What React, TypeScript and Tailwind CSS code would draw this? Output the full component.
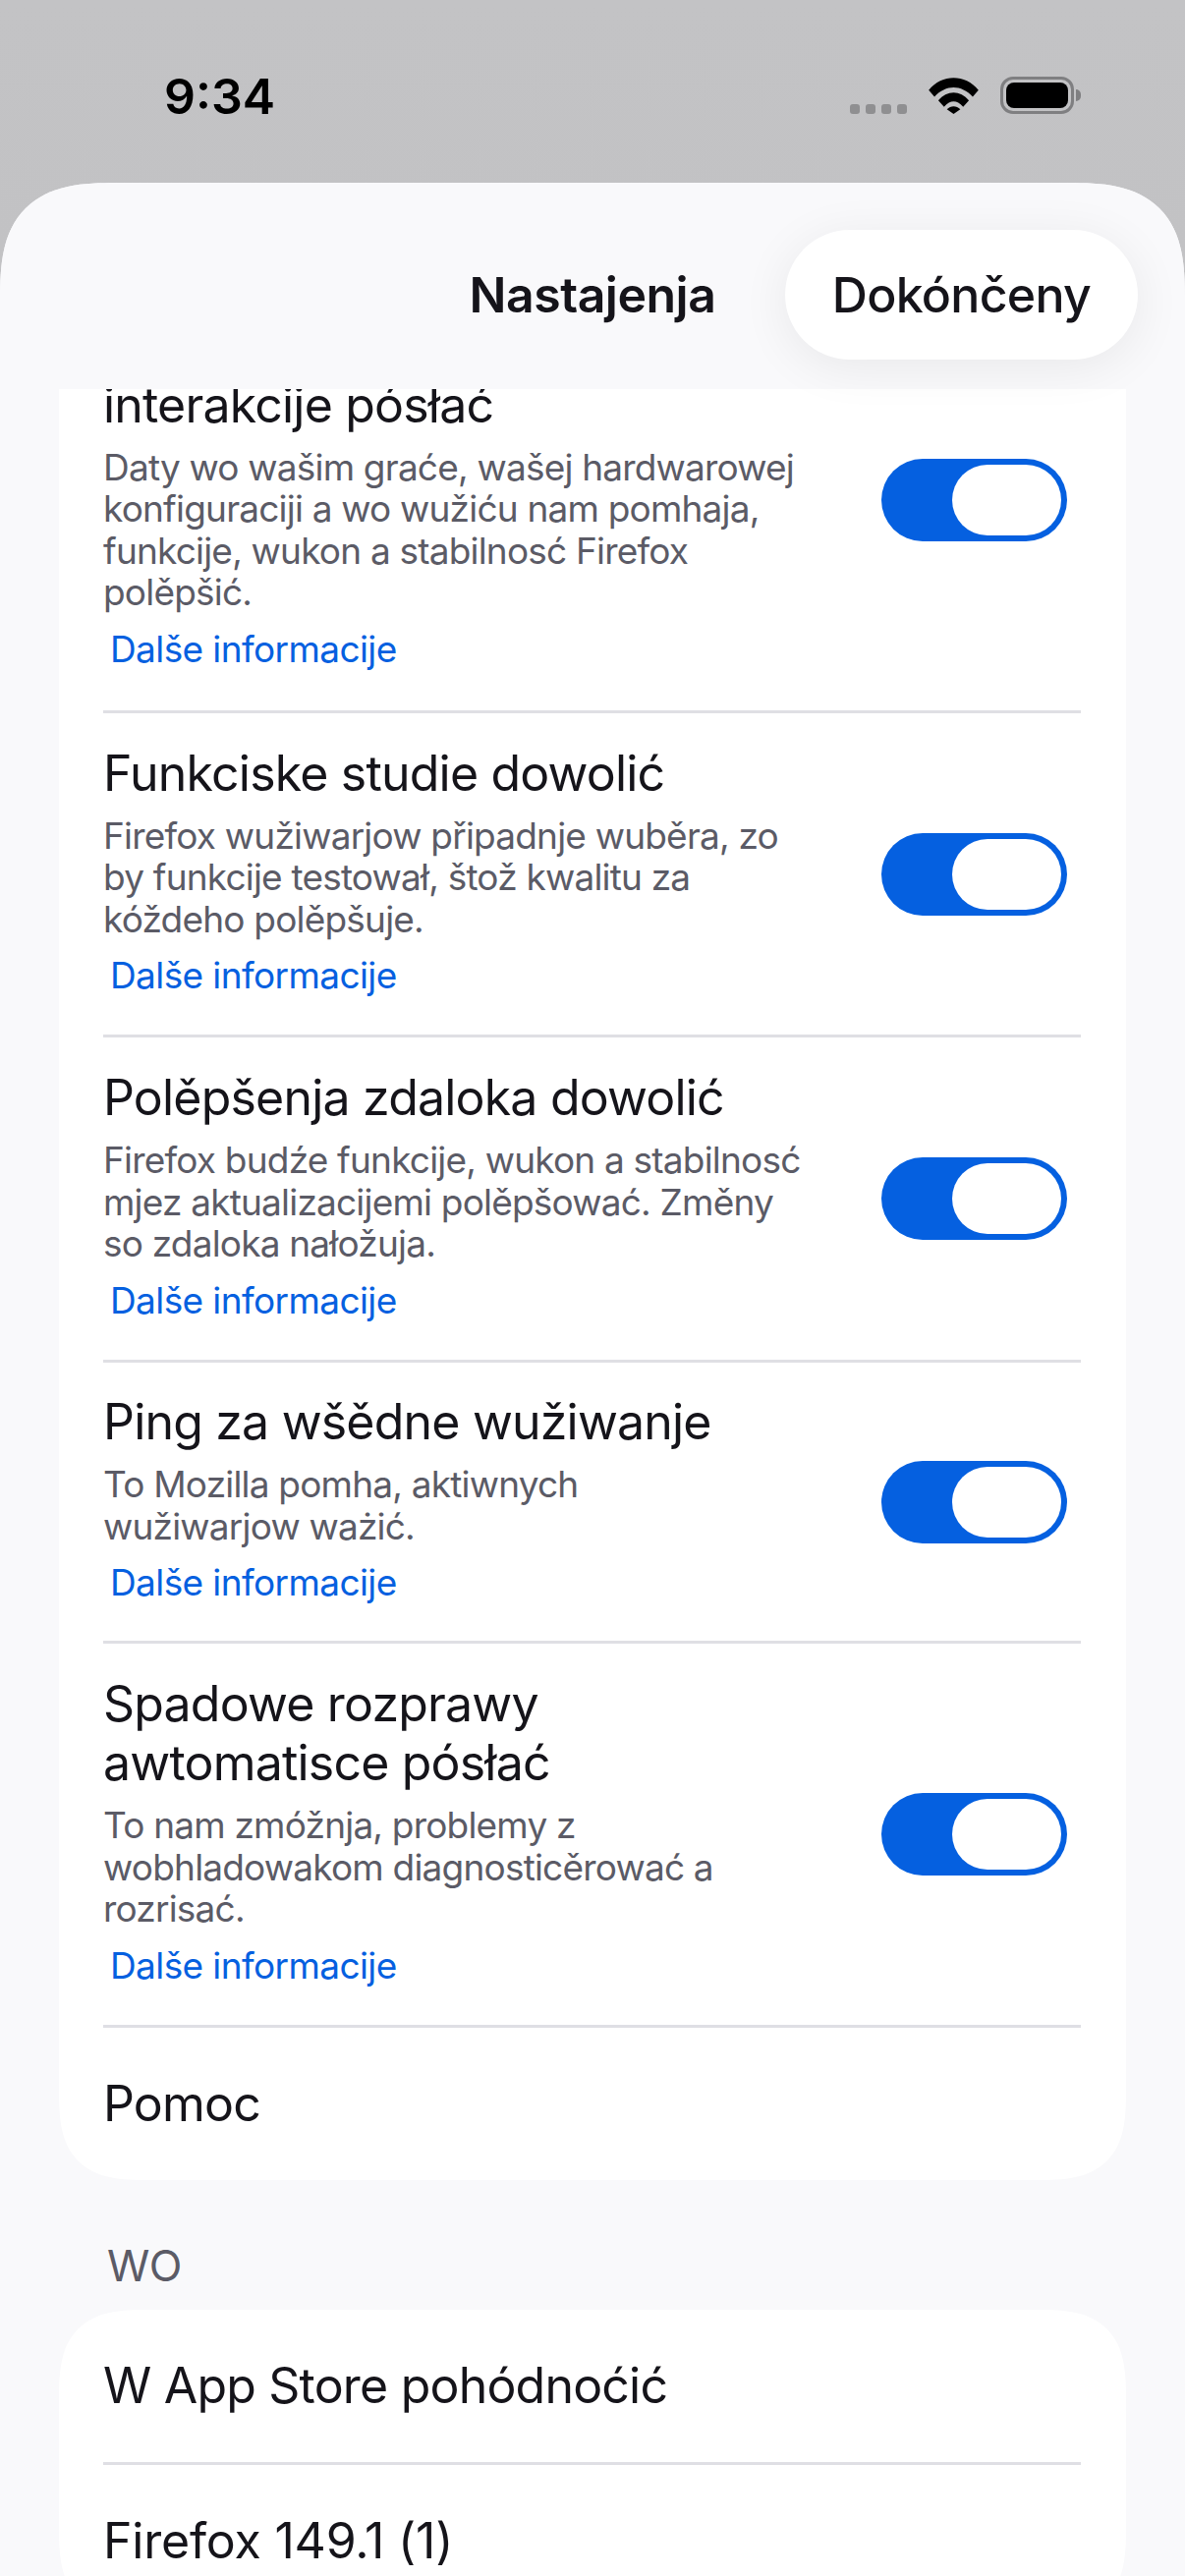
type Row = { title: string[]; desc: string[]; height: string };

const rows: Row[] = [
  {
    title: ['Funkciske studie dowolić'],
    desc: ['Firefox wužiwarjow připadnje wuběra, zo', 'by funkcije testował, štož kwalitu za', 'kóždeho polěpšuje.'],
    height: 'h-[327px]',
  },
  {
    title: ['Polěpšenja zdaloka dowolić'],
    desc: ['Firefox budźe funkcije, wukon a stabilnosć', 'mjez aktualizacijemi polěpšować. Změny', 'so zdaloka nałožuja.'],
    height: 'h-[328px]',
  },
  {
    title: ['Ping za wšědne wužiwanje'],
    desc: ['To Mozilla pomha, aktiwnych', 'wužiwarjow ważić.'],
    height: 'h-[283px]',
  },
  {
    title: ['Spadowe rozprawy', 'awtomatisce pósłać'],
    desc: ['To nam zmóžnja, problemy z', 'wobhladowakom diagnosticěrować a', 'rozrisać.'],
    height: 'h-[388px]',
  },
];

function Toggle() {
  return (
    <div className="flex h-[84px] w-[189px] shrink-0 justify-end rounded-full bg-[#0560e0] p-[6px]">
      <div className="h-[72px] w-[111px] rounded-full bg-white" />
    </div>
  );
}

function Divider() {
  return <div className="ml-[45px] mr-[46px] h-[3px] bg-[#dfdfe4]" />;
}

function Lines({ items }: { items: string[] }) {
  return (
    <>
      {items.map((line) => (
        <div key={line}>{line}</div>
      ))}
    </>
  );
}

function Description({ items }: { items: string[] }) {
  return (
    <>
      <div className="mt-[13px] text-[37px] leading-[42.5px] tracking-[-0.8px] text-[#5b5b66]">
        <Lines items={items} />
      </div>
      <div className="mb-[5px] ml-[7px] mt-[12px] text-[37px] leading-[48px] tracking-[-0.6px] text-[#0560e0]">Dalše informacije</div>
    </>
  );
}

function SettingRow({ row }: { row: Row }) {
  return (
    <div className={`flex items-center justify-between pl-[45px] pr-[60px] ${row.height}`}>
      <div>
        <div className="text-[50px] leading-[60px] tracking-[-0.8px] text-[#15141a]">
          <Lines items={row.title} />
        </div>
        <Description items={row.desc} />
      </div>
      <Toggle />
    </div>
  );
}

function StatusBar() {
  return (
    <div className="flex h-[186px] items-start justify-between pl-[167px] pr-[106px] pt-[70px]">
      <span className="text-[50px] font-semibold leading-[56px] text-black">9:34</span>
      <div className="mt-[8px] flex h-[38px] items-end">
        <div className="mr-[22px] flex gap-[6px]">
          <span className="h-[10px] w-[10px] rounded-[3px] bg-[#8f8f91]" />
          <span className="h-[10px] w-[10px] rounded-[3px] bg-[#8f8f91]" />
          <span className="h-[10px] w-[10px] rounded-[3px] bg-[#8f8f91]" />
          <span className="h-[10px] w-[10px] rounded-[3px] bg-[#8f8f91]" />
        </div>
        <svg width="51" height="37" viewBox="0 0 52 38" className="mr-[22px]">
          <path d="M0 13 C14 -4 38 -4 52 13 L46 20 C34 7 18 7 6 20 Z" fill="#000" />
          <path d="M10 24 C19 13 33 13 42 24 L36 30.5 C29 23 23 23 16 30.5 Z" fill="#000" />
          <path d="M19 33 C23 29 29 29 33 33 L26 38 Z" fill="#000" />
        </svg>
        <div className="flex items-center">
          <div className="flex h-[38px] w-[75px] items-center justify-center rounded-[13px] border-[3px] border-[#7f7f81] p-[3px]">
            <div className="h-full w-full rounded-[8px] bg-black" />
          </div>
          <div className="ml-[2px] h-[12px] w-[5px] rounded-r-full bg-[#7f7f81]" />
        </div>
      </div>
    </div>
  );
}

export default function App() {
  return (
    <div className="h-[2622px] w-[1206px] overflow-hidden bg-gradient-to-b from-[#c3c3c5] to-[#b9b9bb] font-['Inter','Noto_Sans',sans-serif]">
      <StatusBar />
      <div className="flex h-[2436px] flex-col overflow-hidden rounded-t-[120px] bg-[#f9f9fb] [corner-shape:superellipse(1.5)]">
        <header className="relative z-10 flex h-[210px] shrink-0 items-center justify-center bg-[#f9f9fb] pt-[18px]">
          <span className="text-[50px] font-semibold tracking-[-0.5px] text-[#15141a]">Nastajenja</span>
          <div className="absolute right-[48px] top-[48px] flex h-[132px] w-[359px] items-center justify-center rounded-full bg-white text-[50px] font-medium tracking-[-0.7px] text-[#15141a] shadow-[0_8px_50px_rgba(0,0,0,0.07)]">
            Dokónčeny
          </div>
        </header>
        <main className="px-[60px]">
          <div className="-mt-[102px] rounded-b-[90px] bg-white [corner-shape:superellipse(1.5)]">
            <div className="flex h-[429px] items-center justify-between pl-[45px] pr-[60px]">
              <div className="mb-[6px]">
                <div className="h-[60px]" />
                <div className="text-[50px] leading-[60px] tracking-[-0.8px] text-[#15141a]">interakcije pósłać</div>
                <Description
                  items={[
                    'Daty wo wašim graće, wašej hardwarowej',
                    'konfiguraciji a wo wužiću nam pomhaja,',
                    'funkcije, wukon a stabilnosć Firefox',
                    'polěpšić.',
                  ]}
                />
              </div>
              <Toggle />
            </div>
            {rows.map((row) => (
              <div key={row.title[0]}>
                <Divider />
                <SettingRow row={row} />
              </div>
            ))}
            <Divider />
            <div className="flex h-[155px] items-center pl-[45px] text-[50px] tracking-[-0.8px] text-[#15141a]">Pomoc</div>
          </div>
          <div className="ml-[49px] mt-[61px] text-[44px] leading-[52px] tracking-[-0.5px] text-[#5b5b66]">WO</div>
          <div className="mt-[19px] rounded-[90px] bg-white [corner-shape:superellipse(1.5)]">
            <div className="flex h-[155px] items-center pl-[45px] text-[50px] tracking-[-0.8px] text-[#15141a]">W App Store pohódnoćić</div>
            <Divider />
            <div className="flex h-[155px] items-center pl-[45px] text-[50px] tracking-[-0.2px] text-[#15141a]">Firefox 149.1 (1)</div>
          </div>
        </main>
      </div>
    </div>
  );
}
